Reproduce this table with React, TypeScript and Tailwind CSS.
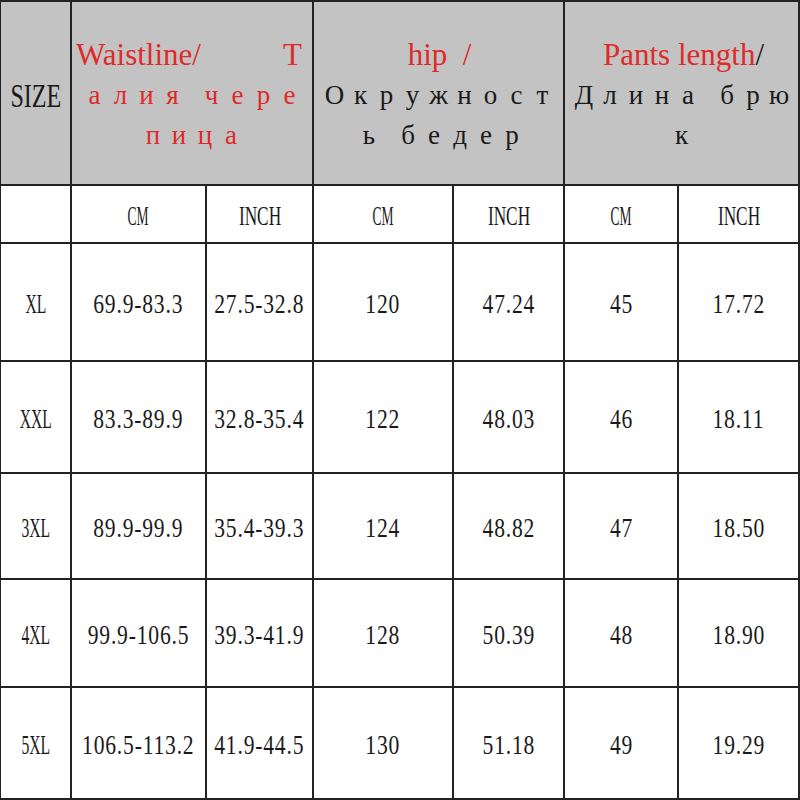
const serif = "font-['Liberation_Serif',serif]"

const rows = [
  ['XL', '69.9-83.3', '27.5-32.8', '120', '47.24', '45', '17.72'],
  ['XXL', '83.3-89.9', '32.8-35.4', '122', '48.03', '46', '18.11'],
  ['3XL', '89.9-99.9', '35.4-39.3', '124', '48.82', '47', '18.50'],
  ['4XL', '99.9-106.5', '39.3-41.9', '128', '50.39', '48', '18.90'],
  ['5XL', '106.5-113.2', '41.9-44.5', '130', '51.18', '49', '19.29'],
]

// one glyph per fixed-width slot, the way the chart spaces its Cyrillic
function Spread({ text, className = '' }: { text: string; className?: string }) {
  return (
    <div className={`flex justify-center h-[40px] leading-[40px] text-[27px] ${className}`}>
      {text.split('').map((ch, i) =>
        ch === ' ' ? (
          <span key={i} className="w-[13px]" />
        ) : (
          <span key={i} className="w-[26px] text-center">
            {ch}
          </span>
        ),
      )}
    </div>
  )
}

function Cell({ children, scale }: { children: string; scale: string }) {
  return (
    <div className="bg-white flex items-center justify-center pt-[5px] overflow-hidden">
      <span className={`inline-block whitespace-nowrap text-[27px] leading-none text-[#1a1a1a] ${scale}`}>
        {children}
      </span>
    </div>
  )
}

export default function App() {
  return (
    <div
      className={`w-[800px] h-[800px] bg-[#222] grid gap-[2px] pl-[1px] pr-[2px] pt-[2px] pb-[2px] ${serif} grid-cols-[69px_133px_105px_138px_109px_112px_119px] grid-rows-[182px_56px_116px_110px_104px_106px_110px]`}
    >
      {/* header */}
      <div className="bg-[#c3c3c3] flex items-center justify-center pt-[6px]">
        <span className="inline-block text-[33px] leading-none text-[#1a1a1a] scale-x-[0.73]">SIZE</span>
      </div>
      <div className="col-span-2 bg-[#c3c3c3] flex flex-col justify-center pt-[4px] text-[#e02a2a]">
        <div className="flex justify-between pl-[4px] pr-[10px] h-[40px] leading-[40px] text-[31px]">
          <span>Waistline/</span>
          <span>T</span>
        </div>
        <Spread text="алия чере" />
        <Spread text="пица" />
      </div>
      <div className="col-span-2 bg-[#c3c3c3] flex flex-col justify-center pt-[4px] text-[#1a1a1a]">
        <div className="text-center h-[40px] leading-[40px] text-[31px] text-[#e02a2a] pl-[2px]">
          hip&nbsp;&nbsp;/
        </div>
        <Spread text="Окружност" />
        <Spread text="ь бедер" className="pl-[4px]" />
      </div>
      <div className="col-span-2 bg-[#c3c3c3] flex flex-col justify-center pt-[4px] text-[#1a1a1a]">
        <div className="text-center h-[40px] leading-[40px] text-[31px] pl-[4px]">
          <span className="text-[#e02a2a]">Pants length</span>/
        </div>
        <Spread text="Длина брю" />
        <Spread text="к" />
      </div>

      {/* units */}
      <div className="bg-white" />
      {['CM', 'INCH', 'CM', 'INCH', 'CM', 'INCH'].map((u, i) => (
        <Cell key={i} scale={u === 'CM' ? 'scale-x-[0.5]' : 'scale-x-[0.64]'}>
          {u}
        </Cell>
      ))}

      {/* sizes */}
      {rows.map((r) =>
        r.map((v, i) => (
          <Cell key={r[0] + i} scale={i === 0 ? 'scale-x-[0.58]' : 'scale-x-[0.8] tracking-[1px]'}>
            {v}
          </Cell>
        )),
      )}
    </div>
  )
}
